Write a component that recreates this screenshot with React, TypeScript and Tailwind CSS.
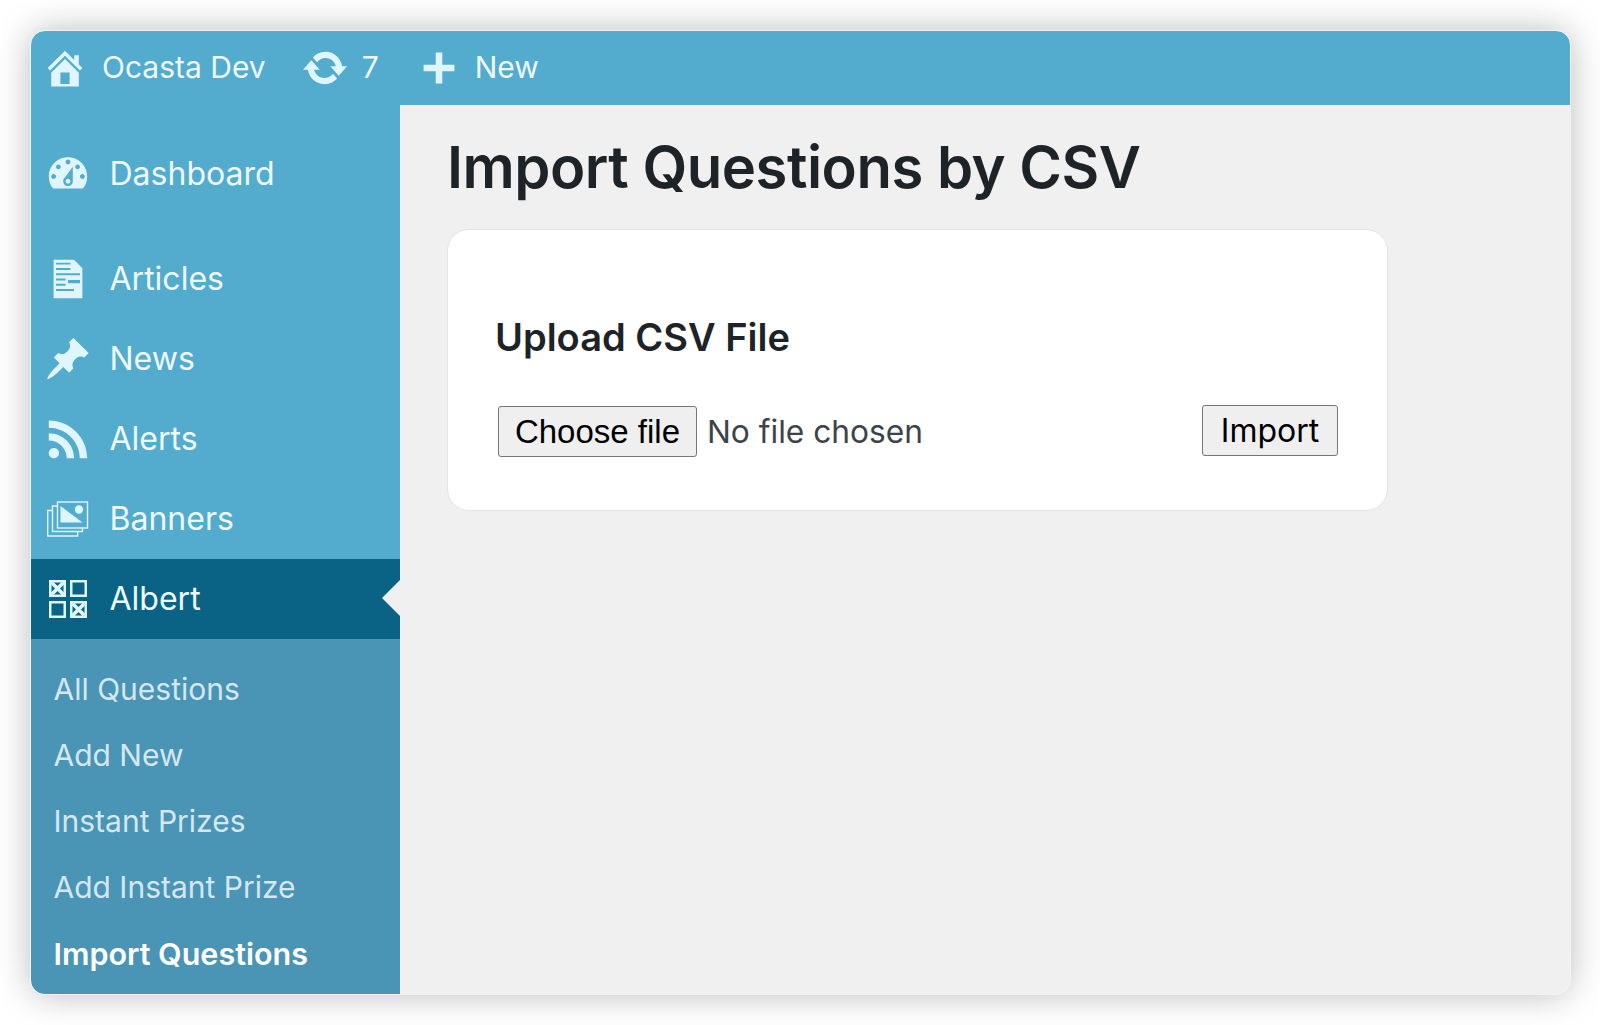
import type { ReactNode } from "react";

const ICON_PATHS = {
  home: "M16 8.5l1.53 1.53-1.06 1.06L10 4.62l-6.47 6.47-1.06-1.06L10 2.5l4 4v-2h2v4zm-6-2.46l6 5.99V18H4v-5.97zM12 17v-5H8v5h4z",
  update:
    "M10.2 3.28c3.53 0 6.43 2.61 6.92 6h2.08l-3.5 4-3.5-4h2.32c-.45-1.97-2.21-3.45-4.32-3.45-1.45 0-2.73.71-3.54 1.78L4.95 5.66C6.23 4.2 8.11 3.28 10.2 3.28zm-.4 13.44c-3.52 0-6.43-2.61-6.92-6H.8l3.5-4c1.17 1.33 2.33 2.67 3.5 4H5.48c.45 1.97 2.21 3.45 4.32 3.45 1.45 0 2.73-.71 3.54-1.78l1.71 1.95c-1.28 1.46-3.15 2.38-5.25 2.38z",
  plus: "M17 8.5v3h-5.5V17h-3v-5.5H3v-3h5.5V3h3v5.5H17z",
  dashboard:
    "M3.76 16h12.48c1.1-1.37 1.76-3.11 1.76-5 0-4.42-3.58-8-8-8s-8 3.58-8 8c0 1.89.66 3.63 1.76 5zM10 4c.55 0 1 .45 1 1s-.45 1-1 1-1-.45-1-1 .45-1 1-1zM6 6c.55 0 1 .45 1 1s-.45 1-1 1-1-.45-1-1 .45-1 1-1zm8 0c.55 0 1 .45 1 1s-.45 1-1 1-1-.45-1-1 .45-1 1-1zm-5.37 5.55L12 7v6c0 1.1-.9 2-2 2s-2-.9-2-2c0-.57.24-1.08.63-1.45zM4 10c.55 0 1 .45 1 1s-.45 1-1 1-1-.45-1-1 .45-1 1-1zm12 0c.55 0 1 .45 1 1s-.45 1-1 1-1-.45-1-1 .45-1 1-1zm-5 3c0-.55-.45-1-1-1s-1 .45-1 1 .45 1 1 1 1-.45 1-1z",
  pin: "M10.44 3.02l1.82-1.82 6.36 6.35-1.83 1.82c-1.05-.68-2.48-.57-3.41.36l-.75.75c-.92.93-1.04 2.35-.35 3.41l-1.83 1.82-2.41-2.41-2.8 2.79c-.42.42-3.38 2.71-3.8 2.29s1.86-3.39 2.28-3.81l2.79-2.79L4.1 9.36l1.83-1.82c1.05.69 2.48.57 3.4-.36l.75-.75c.93-.92 1.05-2.35.36-3.41z",
  rss: "M14.92 18H18C18 9.32 10.82 2.25 2 2.25v3.02c7.12 0 12.92 5.71 12.92 12.73zm-5.44 0h3.08C12.56 12.27 7.82 7.6 2 7.6v3.02c2 0 3.87.77 5.29 2.16C8.7 14.17 9.48 16.03 9.48 18zm-5.35-.02c1.17 0 2.13-.93 2.13-2.09 0-1.15-.96-2.09-2.13-2.09-1.18 0-2.13.94-2.13 2.09 0 1.16.95 2.09 2.13 2.09z",
};

function Icon({ d, className }: { d: string; className: string }) {
  return (
    <svg viewBox="0 0 20 20" fill="currentColor" className={className}>
      <path d={d} />
    </svg>
  );
}

function ArticlesIcon() {
  return (
    <svg viewBox="0 0 20 20" fill="currentColor" className="w-[48px] h-[48px] shrink-0">
      <path
        fillRule="evenodd"
        d="M4 2h8.5L16 5.5V18H4V2zm1 1.2v.8h6v-.8H5zm0 2.2v.8h6v-.8H5zm0 2.2v.8h10v-.8H5zm0 2.2v.8h4v-.8H5zm0 2.2v.8h4v-.8H5zm0 2.2v.8h7.5v-.8H5zm5-6v3.6h5V10.4h-5z"
      />
    </svg>
  );
}

function BannersIcon() {
  return (
    <svg viewBox="0 0 42 36" className="w-[43px] h-[36px] shrink-0">
      <g fill="none" stroke="currentColor" strokeWidth="1.4">
        <rect x="11" y="1" width="30" height="26" />
        <path d="M11 5H6v25.5h30V27" />
        <path d="M6 9.5H1.2V35h30v-4.5" />
      </g>
      <path fill="currentColor" d="M14 5l22 16.5H14z" />
      <circle cx="32.5" cy="8.5" r="4.2" fill="currentColor" />
    </svg>
  );
}

function AlbertIcon() {
  return (
    <svg viewBox="0 0 38 38" className="w-[38px] h-[38px] shrink-0" fill="none" stroke="currentColor">
      <rect x="1.25" y="1.25" width="14.5" height="14.5" strokeWidth="2.5" />
      <path d="M2.5 2.5l12 12M14.5 2.5l-12 12" strokeWidth="3.6" />
      <rect x="22.25" y="1.25" width="14.5" height="14.5" strokeWidth="2.5" />
      <rect x="1.25" y="22.25" width="14.5" height="14.5" strokeWidth="2.5" />
      <rect x="22.25" y="22.25" width="14.5" height="14.5" strokeWidth="2.5" />
      <path d="M23.5 23.5l12 12M35.5 23.5l-12 12" strokeWidth="3.6" />
    </svg>
  );
}

function NavItem({ icon, label, className = "" }: { icon: ReactNode; label: string; className?: string }) {
  return (
    <div className={`h-[80px] flex items-center ${className}`}>
      <div className="w-[73px] mr-[5.5px] flex items-center justify-center text-[#e0f6ff]">{icon}</div>
      <span className="text-[32px] text-[#eef9ff]">{label}</span>
    </div>
  );
}

const subItems = ["All Questions", "Add New", "Instant Prizes", "Add Instant Prize"];

export default function App() {
  return (
    <div className="min-h-[1025px] bg-white pt-[31px] pl-[31px] font-['Inter',sans-serif]">
      <div className="w-[1539px] h-[963px] rounded-[14px] overflow-hidden flex flex-col bg-[#f0f0f0] outline outline-1 outline-white/60 shadow-[0_0_36px_rgba(0,0,0,0.28)]">
        <header className="h-[74px] shrink-0 bg-[#53abce] flex items-center text-[#eef9ff] text-[30px]">
          <Icon d={ICON_PATHS.home} className="w-[46px] h-[46px] ml-[11px] text-[#e0f6ff]" />
          <span className="ml-[14px] -mt-[2px]">Ocasta Dev</span>
          <Icon d={ICON_PATHS.update} className="w-[48px] h-[48px] ml-[35px] text-[#e0f6ff]" />
          <span className="ml-[13px] -mt-[2px]">7</span>
          <Icon d={ICON_PATHS.plus} className="w-[44px] h-[44px] ml-[38px] text-[#e0f6ff]" />
          <span className="ml-[14px] -mt-[2px]">New</span>
        </header>
        <div className="flex flex-1 min-h-0">
          <aside className="w-[369px] shrink-0 flex flex-col bg-[#53abce]">
            <div className="pt-[29px] pb-[25px]">
              <NavItem icon={<Icon d={ICON_PATHS.dashboard} className="w-[48px] h-[48px] shrink-0" />} label="Dashboard" />
            </div>
            <NavItem icon={<ArticlesIcon />} label="Articles" />
            <NavItem icon={<Icon d={ICON_PATHS.pin} className="w-[48px] h-[48px] shrink-0" />} label="News" />
            <NavItem icon={<Icon d={ICON_PATHS.rss} className="w-[48px] h-[48px] shrink-0" />} label="Alerts" />
            <NavItem icon={<BannersIcon />} label="Banners" />
            <div className="relative bg-[#0a6384]">
              <NavItem icon={<AlbertIcon />} label="Albert" />
              <div className="absolute right-0 top-[21px] w-0 h-0 border-y-[18px] border-y-transparent border-r-[18px] border-r-[#f0f0f0]" />
            </div>
            <nav className="flex-1 bg-[#4a94b5] pt-[17.5px]">
              {subItems.map((item) => (
                <div key={item} className="h-[66px] pl-[22.5px] flex items-center text-[30px] text-[#d5e8f1]">
                  {item}
                </div>
              ))}
              <div className="h-[66px] pl-[22.5px] flex items-center text-[30.5px] font-semibold text-white">
                Import Questions
              </div>
            </nav>
          </aside>
          <main className="flex-1 pl-[47px]">
            <h1 className="text-[58px] leading-[124px] h-[124px] font-semibold tracking-[-0.5px] text-[#1d2327]">
              Import Questions by CSV
            </h1>
            <section className="w-[941px] h-[282px] rounded-[22px] bg-white border border-[#e4e4e4] pl-[47px] pr-[49px] pt-[83px]">
              <h2 className="text-[38px] leading-[48px] font-semibold text-[#1d2327]">Upload CSV File</h2>
              <div className="mt-[45px] flex items-center justify-between">
                <div className="flex items-center">
                  <button className="ml-[3px] w-[199px] h-[51px] rounded-[3px] bg-[#efefef] border border-[#767676] text-[33px] text-black font-['Liberation_Sans',sans-serif]">
                    Choose file
                  </button>
                  <span className="ml-[10px] text-[31.7px] text-[#3c434a]">No file chosen</span>
                </div>
                <button className="w-[136px] h-[51px] -mt-[2px] rounded-[3px] bg-[#efefef] border border-[#767676] text-[32px] text-black">
                  Import
                </button>
              </div>
            </section>
          </main>
        </div>
      </div>
    </div>
  );
}
